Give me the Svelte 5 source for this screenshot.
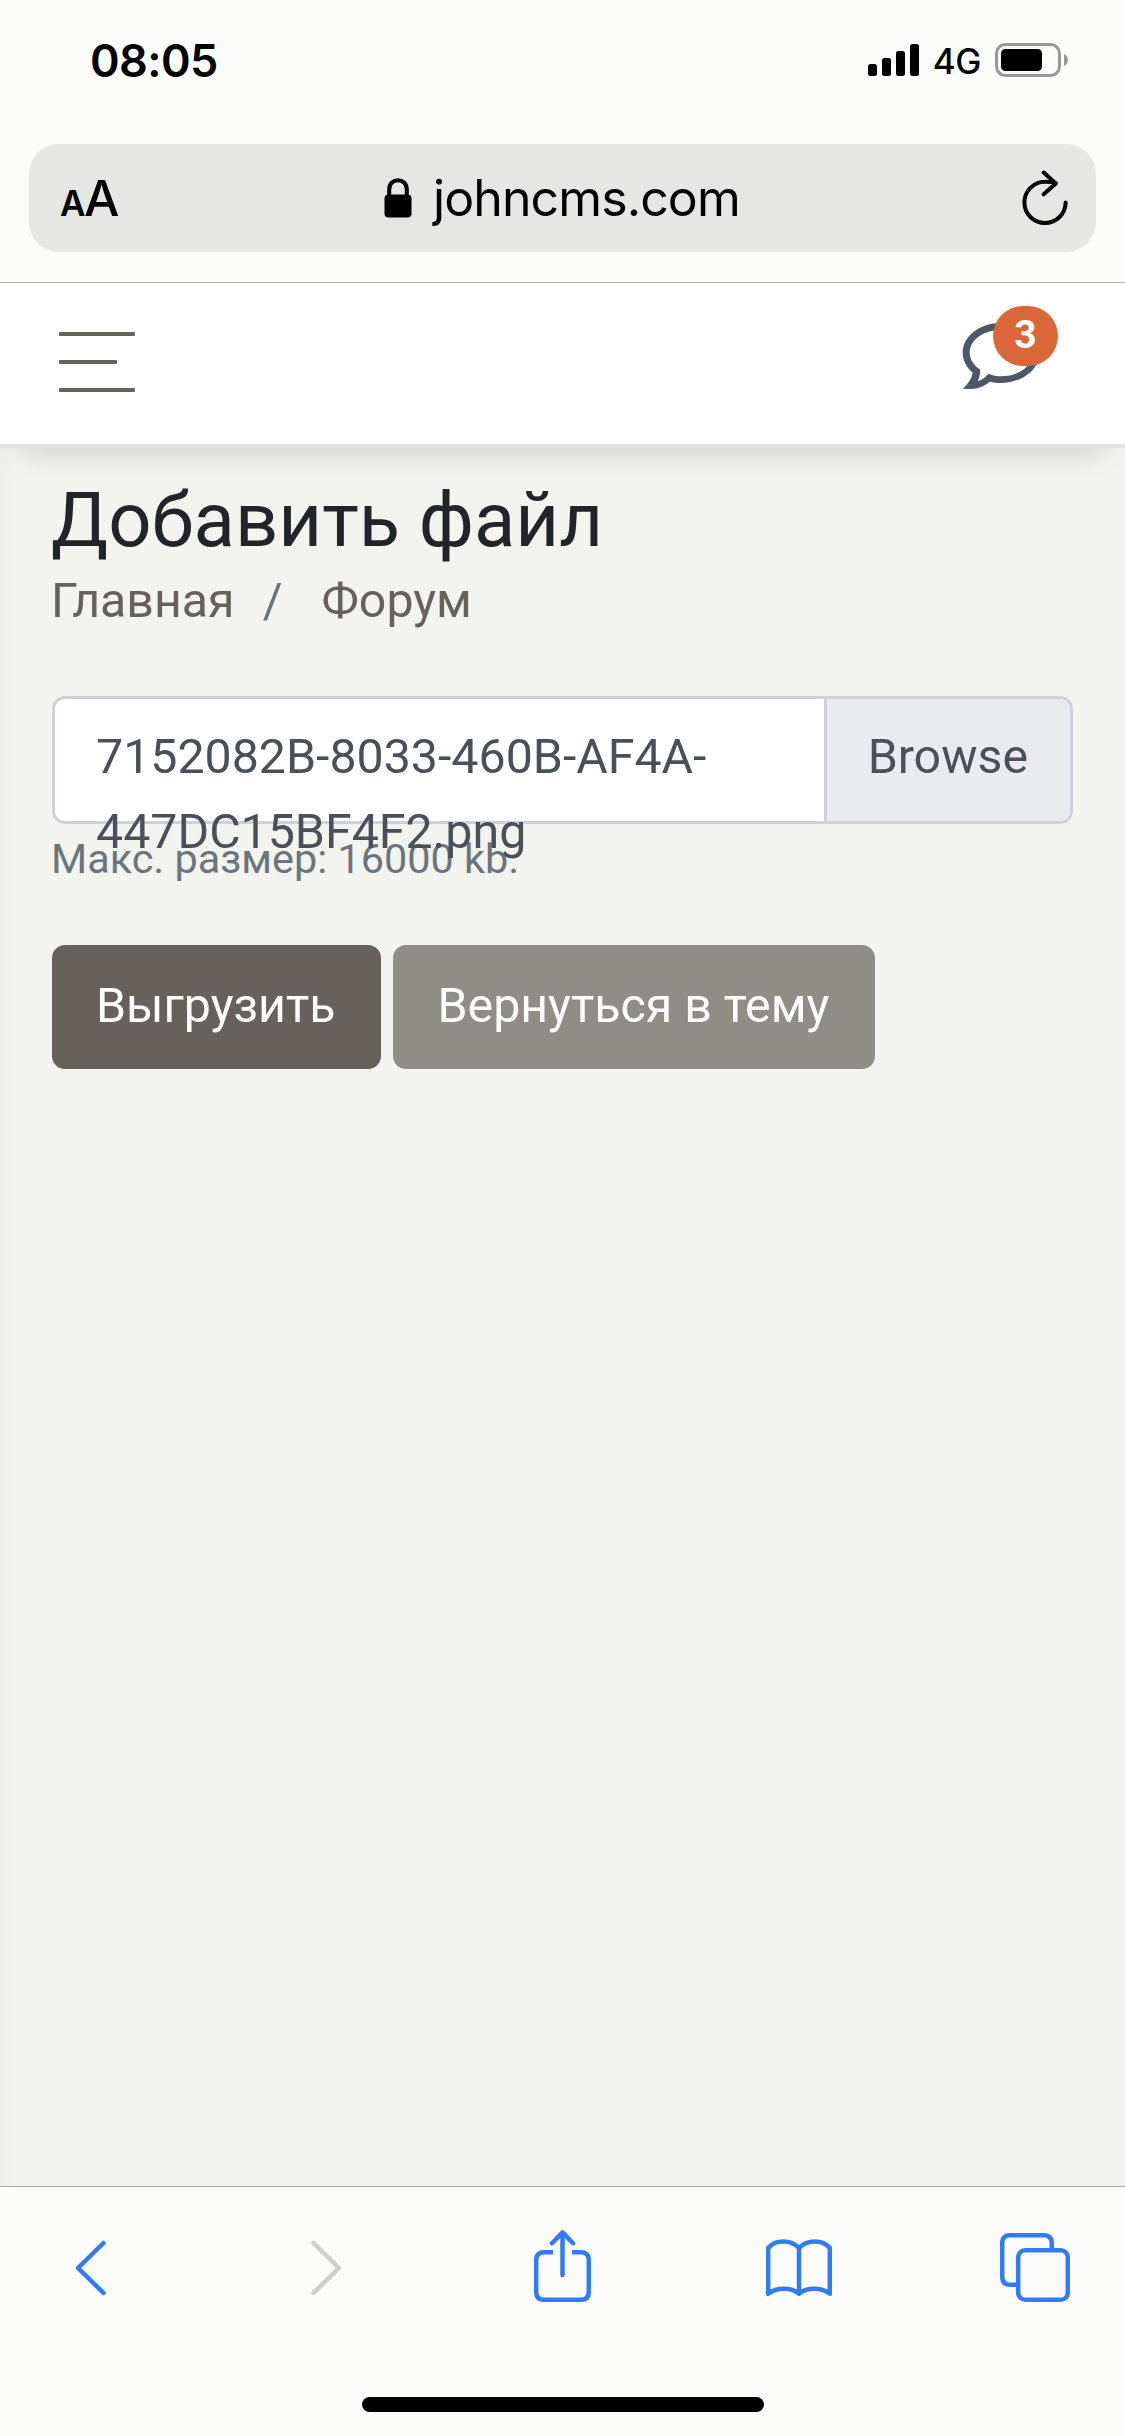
<script lang="ts">
	const fileName = '7152082B-8033-460B-AF4A-447DC15BF4F2.png';
	const signal = [12, 18, 25, 32];
	let unread = $state(3);
</script>

<div class="screen">
	<header class="browser-top">
		<div class="status">
			<span class="time">08:05</span>
			<div class="indicators">
				<svg class="signal" width="51" height="34" viewBox="0 0 51 34">
					{#each signal as h, i}
						<rect x={i * 14} y={33 - h} width="9" height={h} rx="2.5" />
					{/each}
				</svg>
				<span class="network">4G</span>
				<svg class="battery" width="73" height="34" viewBox="0 0 73 34">
					<rect x="1.5" y="1.5" width="63" height="31" rx="9" fill="none" stroke="#989897" stroke-width="3" />
					<rect x="6" y="6" width="41" height="22" rx="4.5" />
					<path d="M69 11 C74.3 13 74.3 21 69 23 Z" fill="#989897" />
				</svg>
			</div>
		</div>
		<div class="address">
			<span class="text-size"><small>A</small>A</span>
			<div class="host">
				<svg width="28" height="40" viewBox="0 0 28 40">
					<path d="M5.2 18 V11.5 C5.2 -0.8 22.8 -0.8 22.8 11.5 V18" fill="none" stroke="#000" stroke-width="4" />
					<rect x=".5" y="16.5" width="27" height="23" rx="4" />
				</svg>
				<span>johncms.com</span>
			</div>
			<svg class="reload" width="47" height="56" viewBox="0 0 47 56">
				<path d="M43.6 32.4 A20.6 20.6 0 1 1 23 11.8 Q28.5 11.6 33.5 13.2" />
				<path d="M21.7 2.5 L33.8 13.4 L21.7 24.3" />
			</svg>
		</div>
	</header>

	<nav class="navbar">
		<button class="toggle" aria-label="Меню">
			<span></span>
			<span class="short"></span>
			<span></span>
		</button>
		<a class="messages" href="#messages" aria-label="Сообщения">
			<svg width="80" height="68" viewBox="962 322 80 68">
				<path
					fill-rule="evenodd"
					d="M962.7 388.8 C968 384 971.5 379 972.7 372.7 C966 367 962.7 360 962.7 352.7 C962.7 336 980 323 1001 323 S1039.5 336 1039.5 352.7 S1022 383 1001 383 C997 383 993 382.6 990 381.7 C984 386 978 389 971 388.9 Z M980 369.5 C980.3 374 979.5 378 977.7 381.3 C982 379.8 986 377 988.7 373.7 C993 375.5 997 376.3 1001 376.3 C1018.5 376.3 1032.8 366 1032.8 352.7 S1018.5 330 1001 330 S969.7 340 969.7 352.7 C969.7 359.5 974 365.5 980 369.5 Z"
				/>
			</svg>
			<span class="badge">{unread}</span>
		</a>
	</nav>

	<main>
		<h1>Добавить файл</h1>
		<div class="breadcrumb">
			<a href="#home">Главная</a>
			<span class="slash">/</span>
			<a href="#forum">Форум</a>
		</div>
		<label class="file">
			<span class="file-name">{fileName}</span>
			<span class="browse">Browse</span>
		</label>
		<div class="hint">Макс. размер: 16000 kb.</div>
		<div class="actions">
			<button class="btn primary">Выгрузить</button>
			<button class="btn">Вернуться в тему</button>
		</div>
	</main>

	<footer>
		<div class="tools">
			<div class="tool">
				<svg width="31" height="56" viewBox="0 0 31 56"><path d="M28.5 3 L3 28 L28.5 53" /></svg>
			</div>
			<div class="tool disabled">
				<svg width="31" height="56" viewBox="0 0 31 56"><path d="M2.5 3 L28 28 L2.5 53" /></svg>
			</div>
			<div class="tool share">
				<svg width="57" height="72" viewBox="0 0 57 72">
					<path stroke-linecap="butt" d="M19 22.2 H10.2 Q2.2 22.2 2.2 30.2 V61.8 Q2.2 69.8 10.2 69.8 H46.8 Q54.8 69.8 54.8 61.8 V30.2 Q54.8 22.2 46.8 22.2 H38" />
					<path d="M28.5 45 V2.5 M18 13.3 L28.5 2.4 L39 13.3" />
				</svg>
			</div>
			<div class="tool">
				<svg width="66" height="58" viewBox="0 0 66 58">
					<path d="M2.2 9 C9 .3 25 .3 33 9 C41 .3 57 .3 63.8 9 V54.8 C55 48.2 41 48.2 33 54.8 C25 48.2 11 48.2 2.2 54.8 Z M33 9 V54.8" />
				</svg>
			</div>
			<div class="tool">
				<svg width="70" height="70" viewBox="0 0 70 70">
					<path d="M51.8 16 V10.2 Q51.8 2.2 43.8 2.2 H10.2 Q2.2 2.2 2.2 10.2 V43.8 Q2.2 51.8 10.2 51.8 H17" />
					<rect x="18.2" y="17.2" width="49.6" height="49.6" rx="7" />
				</svg>
			</div>
		</div>
		<div class="home-bar"></div>
	</footer>
</div>

<style>
	:global(body) {
		margin: 0;
		background: #f3f3ef;
	}
	.screen {
		display: flex;
		flex-direction: column;
		width: 1125px;
		height: 2436px;
		overflow: hidden;
		font-family: Roboto, sans-serif;
		font-size: 48.3px;
		line-height: 75px;
		color: #212529;
	}
	svg {
		display: block;
		flex: none;
	}
	a {
		color: #66615b;
		text-decoration: none;
	}
	button {
		border: 0;
		padding: 0;
		font: inherit;
	}

	.browser-top {
		box-sizing: border-box;
		height: 283px;
		background: #fcfcfa;
		border-bottom: 1px solid #b2b2b1;
		font-family: Inter, sans-serif;
		color: #000;
	}
	.status {
		display: flex;
		justify-content: space-between;
		align-items: center;
		box-sizing: border-box;
		height: 144px;
		padding: 0 57px 24px 90px;
	}
	.time {
		font-size: 45px;
		font-weight: 600;
		letter-spacing: -0.6px;
	}
	.indicators {
		display: flex;
		align-items: center;
	}
	.network {
		margin: 1px 14px 0;
		font-size: 35px;
		font-weight: 500;
		line-height: 40px;
		letter-spacing: -0.4px;
	}
	.address {
		display: flex;
		align-items: center;
		box-sizing: border-box;
		height: 108px;
		margin: 0 29px;
		padding: 0 27px 0 31px;
		border-radius: 30px;
		background: #e6e6e4;
	}
	.text-size {
		width: 324px;
		padding-top: 5px;
		font-size: 50px;
		font-weight: 500;
		letter-spacing: -1.5px;
	}
	.text-size small {
		font-size: 35px;
		font-weight: 600;
	}
	.host {
		display: flex;
		flex: 1;
		align-items: center;
		gap: 21px;
		font-size: 50px;
		letter-spacing: -0.9px;
	}
	.reload path {
		fill: none;
		stroke: #000;
		stroke-width: 4;
		stroke-linecap: round;
		stroke-linejoin: round;
	}

	.navbar {
		display: flex;
		justify-content: space-between;
		align-items: flex-start;
		box-sizing: border-box;
		position: relative;
		height: 165px;
		padding: 23px 67px 0 59px;
		background: #fff;
		border-bottom: 4px solid #dee2e6;
		box-shadow: 0 25px 30px -22px rgba(0, 0, 0, 0.17);
	}
	.toggle {
		display: flex;
		flex-direction: column;
		gap: 24px;
		margin-top: 26px;
		background: none;
	}
	.toggle span {
		width: 76px;
		height: 4px;
		border-radius: 1px;
		background: #66635b;
	}
	.toggle .short {
		width: 58px;
	}
	.messages {
		position: relative;
		width: 96px;
		padding-top: 16px;
		fill: #4d5865;
	}
	.badge {
		position: absolute;
		top: 0;
		right: 0;
		width: 65px;
		height: 60px;
		border-radius: 31px;
		background: #d96739;
		color: #fff;
		font-size: 39px;
		font-weight: 700;
		line-height: 58px;
		text-align: center;
	}

	main {
		flex: 1;
		padding: 27px 52px 0;
		background: #f3f3ef;
		box-shadow: inset 24px 0 26px -24px rgba(0, 0, 0, 0.05);
	}
	h1 {
		margin: 0 0 0 -1px;
		font-size: 76px;
		font-weight: 400;
		line-height: 90px;
	}
	.breadcrumb {
		display: flex;
		margin-left: -1px;
		padding-top: 1px;
		line-height: 70px;
	}
	.slash {
		margin: 0 39px 0 28px;
		color: #6c757d;
	}
	.file {
		position: relative;
		z-index: 1;
		display: flex;
		box-sizing: border-box;
		height: 128px;
		margin-top: 60px;
		border: 3px solid #cfd1da;
		border-radius: 13px;
		background: #fff;
		color: #495057;
	}
	.file-name {
		flex: 1;
		height: 75px;
		padding: 20px 41px;
	}
	.browse {
		padding: 20px 42px 0 41px;
		border-left: 3px solid #cfd1da;
		border-radius: 0 10px 10px 0;
		background: #e9ebef;
	}
	.hint {
		margin: 5px 0 0 -1px;
		font-size: 41.4px;
		line-height: 60px;
		color: #6c757d;
	}
	.actions {
		display: flex;
		gap: 12px;
		margin-top: 56px;
	}
	.btn {
		height: 124px;
		padding: 0 46px 3px 44px;
		border-radius: 13px;
		background: #908c86;
		color: #fff;
	}
	.btn.primary {
		background: #66615b;
	}

	footer {
		display: flex;
		flex-direction: column;
		align-items: center;
		box-sizing: border-box;
		height: 250px;
		border-top: 1px solid #a9a9a7;
		background: #fcfcfb;
	}
	.tools {
		display: flex;
		justify-content: space-between;
		align-items: center;
		box-sizing: border-box;
		width: 100%;
		height: 162px;
		padding: 0 55px;
	}
	.tool {
		display: flex;
		justify-content: center;
		width: 70px;
		stroke: #327bf7;
	}
	.tool svg {
		fill: none;
		stroke-width: 4.5;
		stroke-linecap: round;
		stroke-linejoin: round;
	}
	.share {
		padding-bottom: 4px;
	}
	.disabled {
		stroke: #cecece;
	}
	.home-bar {
		width: 402px;
		height: 15px;
		margin-top: 48px;
		border-radius: 8px;
		background: #000;
	}
</style>
